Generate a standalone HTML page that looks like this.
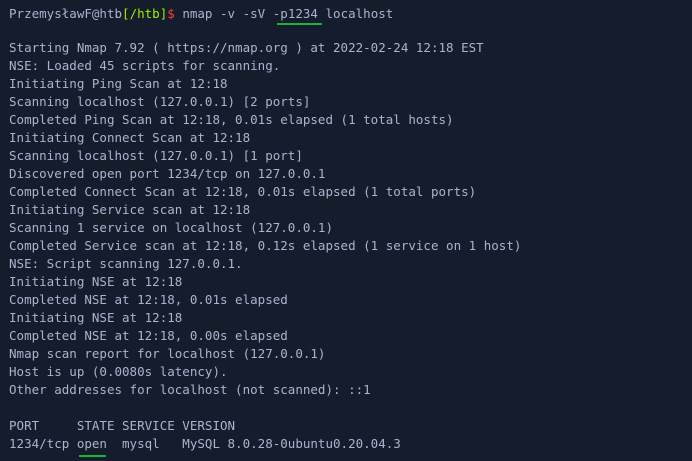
<!DOCTYPE html>
<html><head><style>
html,body{margin:0;padding:0;background:#141d2b;width:692px;height:461px;overflow:hidden}
.t{position:absolute;left:9px;font-family:"DejaVu Sans Mono","Liberation Mono",monospace;font-size:12.52px;line-height:18px;color:#a9b5cf;white-space:pre;letter-spacing:0}
.g{color:#9fef00}.r{color:#ff3e3e}
.u{position:absolute;height:2px;background:#1fae3a}
</style></head><body>
<div class="t" style="top:5px">PrzemysławF@htb<span class="g">[/htb]</span><span class="r">$</span> nmap -v -sV -p1234 localhost</div>
<div class="u" style="left:277px;top:23px;width:45px"></div>
<div class="t" style="top:39px">Starting Nmap 7.92 ( https://nmap.org ) at 2022-02-24 12:18 EST
NSE: Loaded 45 scripts for scanning.
Initiating Ping Scan at 12:18
Scanning localhost (127.0.0.1) [2 ports]
Completed Ping Scan at 12:18, 0.01s elapsed (1 total hosts)
Initiating Connect Scan at 12:18
Scanning localhost (127.0.0.1) [1 port]
Discovered open port 1234/tcp on 127.0.0.1
Completed Connect Scan at 12:18, 0.01s elapsed (1 total ports)
Initiating Service scan at 12:18
Scanning 1 service on localhost (127.0.0.1)
Completed Service scan at 12:18, 0.12s elapsed (1 service on 1 host)
NSE: Script scanning 127.0.0.1.
Initiating NSE at 12:18
Completed NSE at 12:18, 0.01s elapsed
Initiating NSE at 12:18
Completed NSE at 12:18, 0.00s elapsed
Nmap scan report for localhost (127.0.0.1)
Host is up (0.0080s latency).
Other addresses for localhost (not scanned): ::1

PORT     STATE SERVICE VERSION
1234/tcp open  mysql   MySQL 8.0.28-0ubuntu0.20.04.3</div>
<div class="u" style="left:79px;top:455px;width:27px"></div>
</body></html>
